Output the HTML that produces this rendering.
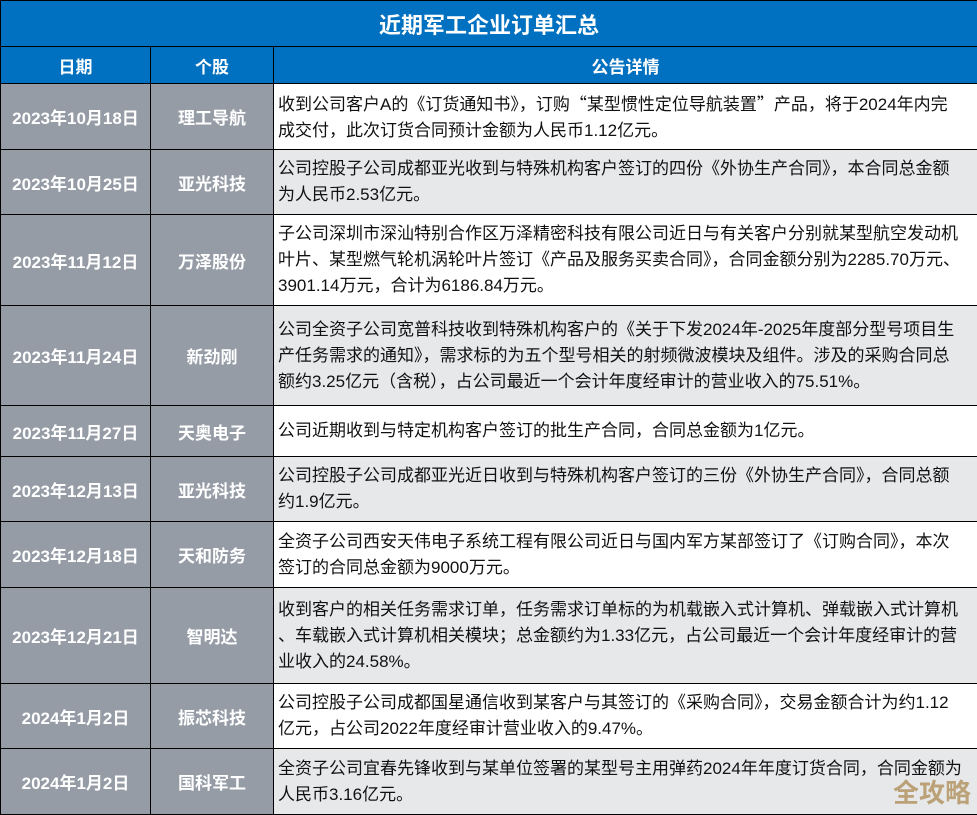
<!DOCTYPE html>
<html><head><meta charset="utf-8"><style>
*{margin:0;padding:0;box-sizing:border-box}
body{width:977px;height:814px;background:#fff;font-family:"Liberation Sans","Noto Sans CJK SC",sans-serif;position:relative;overflow:hidden}
table{border-collapse:collapse;position:absolute;left:0;top:0;width:977px;table-layout:fixed}
td{border:1.5px solid #000;padding:0}
.t{background:#0070c0;color:#fff;font-weight:bold;font-size:22px;text-align:center;height:46px}
.h td{background:#0070c0;color:#fff;font-weight:bold;font-size:17px;text-align:center;height:37px}
.a,.b{background:#959ca6;color:#fff;font-weight:bold;font-size:17px;text-align:center}
.c{font-size:17px;line-height:26px;color:#111;padding:0 4px;white-space:nowrap;letter-spacing:0}
.q{font-family:"Noto Sans CJK SC",sans-serif}
.g{background:#e7e8ea}
.wm{position:absolute;right:6px;bottom:4px;font-size:26px;font-weight:bold;color:#b79a6b;opacity:.9}
</style></head><body>
<table>
<colgroup><col style="width:150px"><col style="width:123px"><col style="width:704px"></colgroup>
<tr><td colspan="3" class="t">近期军工企业订单汇总</td></tr>
<tr class="h"><td>日期</td><td>个股</td><td>公告详情</td></tr>
<tr style="height:66px"><td class="a">2023年10月18日</td><td class="b">理工导航</td><td class="c">收到公司客户A的《订货通知书》，订购<span class="q">“</span>某型惯性定位导航装置<span class="q">”</span>产品，将于2024年内完<br>成交付，此次订货合同预计金额为人民币1.12亿元。</td></tr>
<tr style="height:65px"><td class="a">2023年10月25日</td><td class="b">亚光科技</td><td class="c g">公司控股子公司成都亚光收到与特殊机构客户签订的四份《外协生产合同》，本合同总金额<br>为人民币2.53亿元。</td></tr>
<tr style="height:91px"><td class="a">2023年11月12日</td><td class="b">万泽股份</td><td class="c">子公司深圳市深汕特别合作区万泽精密科技有限公司近日与有关客户分别就某型航空发动机<br>叶片、某型燃气轮机涡轮叶片签订《产品及服务买卖合同》，合同金额分别为2285.70万元、<br>3901.14万元，合计为6186.84万元。</td></tr>
<tr style="height:100px"><td class="a">2023年11月24日</td><td class="b">新劲刚</td><td class="c g">公司全资子公司宽普科技收到特殊机构客户的《关于下发2024年-2025年度部分型号项目生<br>产任务需求的通知》，需求标的为五个型号相关的射频微波模块及组件。涉及的采购合同总<br>额约3.25亿元（含税），占公司最近一个会计年度经审计的营业收入的75.51%。</td></tr>
<tr style="height:51px"><td class="a">2023年11月27日</td><td class="b">天奥电子</td><td class="c">公司近期收到与特定机构客户签订的批生产合同，合同总金额为1亿元。</td></tr>
<tr style="height:65px"><td class="a">2023年12月13日</td><td class="b">亚光科技</td><td class="c g">公司控股子公司成都亚光近日收到与特殊机构客户签订的三份《外协生产合同》，合同总额<br>约1.9亿元。</td></tr>
<tr style="height:66px"><td class="a">2023年12月18日</td><td class="b">天和防务</td><td class="c">全资子公司西安天伟电子系统工程有限公司近日与国内军方某部签订了《订购合同》，本次<br>签订的合同总金额为9000万元。</td></tr>
<tr style="height:96px"><td class="a">2023年12月21日</td><td class="b">智明达</td><td class="c g">收到客户的相关任务需求订单，任务需求订单标的为机载嵌入式计算机、弹载嵌入式计算机<br>、车载嵌入式计算机相关模块；总金额约为1.33亿元，占公司最近一个会计年度经审计的营<br>业收入的24.58%。</td></tr>
<tr style="height:65px"><td class="a">2024年1月2日</td><td class="b">振芯科技</td><td class="c">公司控股子公司成都国星通信收到某客户与其签订的《采购合同》，交易金额合计为约1.12<br>亿元，占公司2022年度经审计营业收入的9.47%。</td></tr>
<tr style="height:66px"><td class="a">2024年1月2日</td><td class="b">国科军工</td><td class="c g">全资子公司宜春先锋收到与某单位签署的某型号主用弹药2024年年度订货合同，合同金额为<br>人民币3.16亿元。</td></tr>
</table>
<div class="wm">全攻略</div>
</body></html>
